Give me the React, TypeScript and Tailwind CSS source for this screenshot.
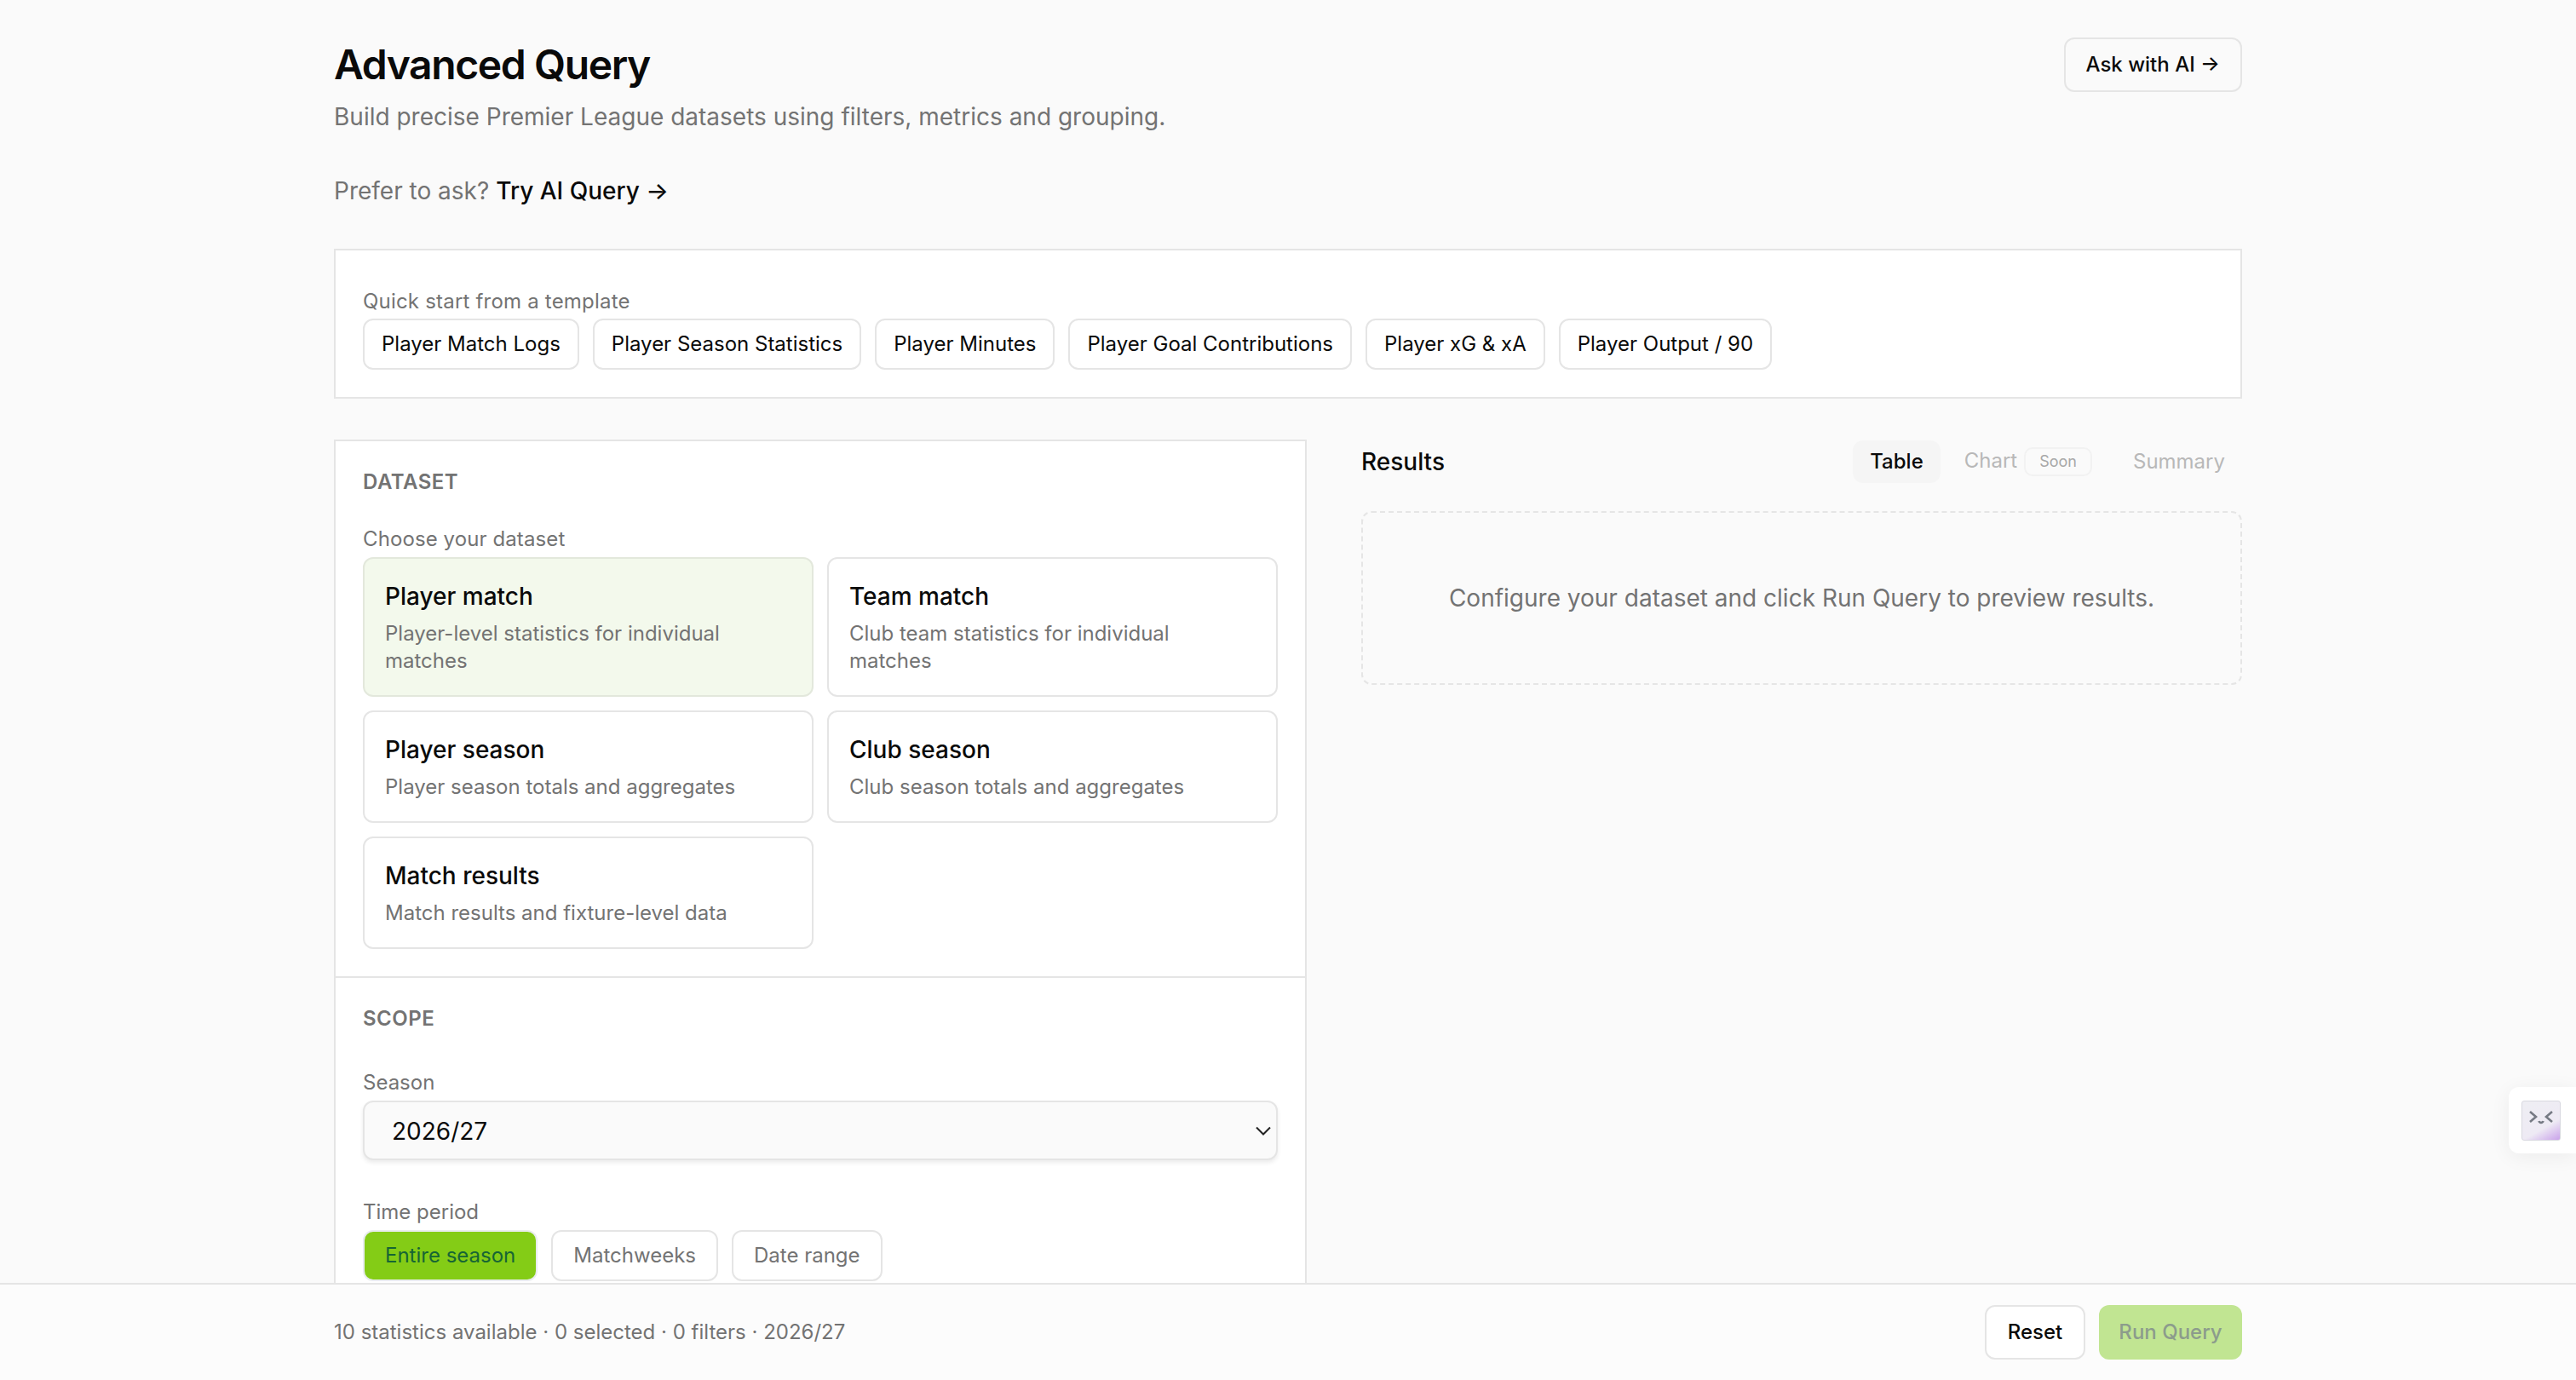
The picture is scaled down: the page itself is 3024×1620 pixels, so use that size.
const templates = [
  "Player Match Logs",
  "Player Season Statistics",
  "Player Minutes",
  "Player Goal Contributions",
  "Player xG & xA",
  "Player Output / 90",
];

const datasets = [
  { title: "Player match", desc: "Player-level statistics for individual matches", active: true },
  { title: "Team match", desc: "Club team statistics for individual matches" },
  { title: "Player season", desc: "Player season totals and aggregates" },
  { title: "Club season", desc: "Club season totals and aggregates" },
  { title: "Match results", desc: "Match results and fixture-level data" },
];

function DatasetCard({ title, desc, active }: { title: string; desc: string; active?: boolean }) {
  return (
    <button
      type="button"
      className={
        active
          ? "rounded-[12px] border-2 border-[#e3e8dc] bg-[#f3f9ec] p-[24px] text-left"
          : "rounded-[12px] border-2 border-[#e5e5e5] bg-white p-[24px] text-left"
      }
    >
      <div className="text-[28px] leading-[40px] font-medium text-[#0a0a0a]">{title}</div>
      <div className="mt-[8px] text-[24px] leading-[32px] text-[#737373]">{desc}</div>
    </button>
  );
}

function TimeButton({ label, active }: { label: string; active?: boolean }) {
  return (
    <button
      type="button"
      className={
        active
          ? "h-[60px] rounded-[12px] border-2 border-[#e9ecef] bg-[#84cc16] px-[24px] text-[24px] text-[#166534]"
          : "h-[60px] rounded-[12px] border-2 border-[#e5e5e5] bg-white px-[24px] text-[24px] text-[#737373]"
      }
    >
      {label}
    </button>
  );
}

export default function App() {
  return (
    <div className="relative flex h-screen flex-col overflow-hidden bg-[#fafafa] font-['Inter',sans-serif] text-[#0a0a0a]">
      <main className="min-h-0 flex-1 overflow-hidden">
        <div className="mx-auto w-[2240px] pt-[44px]">
          <header className="flex items-start justify-between">
            <div>
              <h1 className="text-[48px] leading-[64px] font-semibold tracking-[-1.4px]">Advanced Query</h1>
              <p className="mt-[9px] text-[28px] leading-[40px] text-[#737373]">
                Build precise Premier League datasets using filters, metrics and grouping.
              </p>
            </div>
            <button
              type="button"
              className="h-[64px] rounded-[12px] border-2 border-[#e5e5e5] bg-[#fafafa] px-[24px] text-[24px] font-medium"
            >
              Ask with AI →
            </button>
          </header>

          <p className="mt-[47px] text-[28px] leading-[40px] text-[#737373]">
            Prefer to ask? <span className="font-medium text-[#0a0a0a]">Try AI Query →</span>
          </p>

          <section className="mt-[48px] border-2 border-[#e5e5e5] bg-white px-[32px] pt-[40px] pb-[32px]">
            <div className="text-[24px] leading-[40px] tracking-[0.2px] text-[#737373]">Quick start from a template</div>
            <div className="flex gap-[16px]">
              {templates.map((t) => (
                <button
                  key={t}
                  type="button"
                  className="h-[60px] rounded-[12px] border-2 border-[#e5e5e5] bg-white px-[20px] text-[24px]"
                >
                  {t}
                </button>
              ))}
            </div>
          </section>

          <div className="mt-[48px] grid grid-cols-[1142px_1034px] gap-[64px]">
            {/* Left panel, cut off by the footer */}
            <div className="border-2 border-[#e5e5e5] bg-white">
              <section className="border-b-2 border-[#e5e5e5] p-[32px]">
                <h2 className="text-[24px] leading-[32px] font-semibold tracking-[0.5px] text-[#737373]">DATASET</h2>
                <div className="mt-[31px] mb-[1px] text-[24px] leading-[40px] tracking-[0.1px] text-[#737373]">
                  Choose your dataset
                </div>
                <div className="grid grid-cols-2 gap-[16px]">
                  {datasets.map((d) => (
                    <DatasetCard key={d.title} {...d} />
                  ))}
                </div>
              </section>
              <section className="p-[32px]">
                <h2 className="text-[24px] leading-[32px] font-semibold tracking-[0.5px] text-[#737373]">SCOPE</h2>
                <div className="mt-[39px] mb-[1px] text-[24px] leading-[40px] text-[#737373]">Season</div>
                <div className="flex h-[70px] items-center justify-between rounded-[12px] border-2 border-[#e5e5e5] bg-[#fafafa] pr-[6px] pl-[32px] text-[28px] shadow-[0_3px_5px_rgba(0,0,0,0.08)]">
                  <span className="pt-[1px]">2026/27</span>
                  <svg width="18" height="11" viewBox="0 0 18 11" fill="none" stroke="#222222" strokeWidth="2">
                    <path d="M1 1.5l8 8 8-8" />
                  </svg>
                </div>
                <div className="mt-[41px] mb-[1px] text-[24px] leading-[40px] text-[#737373]">Time period</div>
                <div className="flex gap-[16px]">
                  <TimeButton label="Entire season" active />
                  <TimeButton label="Matchweeks" />
                  <TimeButton label="Date range" />
                </div>
              </section>
            </div>

            <div>
              <div className="mt-[1px] flex h-[50px] items-center justify-between">
                <h2 className="text-[28px] font-medium">Results</h2>
                <div className="flex gap-[8px] text-[24px]">
                  <button type="button" className="h-[50px] rounded-[12px] bg-[#f5f5f5] px-[20px] font-medium">
                    Table
                  </button>
                  <button type="button" className="flex h-[50px] items-center gap-[8px] px-[20px] text-[#b8b8b8]">
                    <span className="-mt-[3px]">Chart</span>
                    <span className="rounded-[10px] border-2 border-[#f2f2f2] px-[16px] text-[18px] leading-[30px] text-[#a8a8a8]">
                      Soon
                    </span>
                  </button>
                  <button type="button" className="h-[50px] px-[20px] text-[#b8b8b8]">
                    Summary
                  </button>
                </div>
              </div>
              <div className="mt-[33px] flex h-[204px] items-center justify-center rounded-[12px] border-2 border-dashed border-[#e5e5e5] text-[28px] text-[#737373]">
                Configure your dataset and click Run Query to preview results.
              </div>
            </div>
          </div>
        </div>
      </main>

      <footer className="h-[114px] shrink-0 border-t-2 border-[#e5e5e5] bg-[#fcfcfc]">
        <div className="mx-auto flex h-full w-[2240px] items-center justify-between">
          <span className="text-[24px] text-[#737373]">10 statistics available · 0 selected · 0 filters · 2026/27</span>
          <div className="flex gap-[16px]">
            <button
              type="button"
              className="h-[64px] w-[118px] rounded-[12px] border-2 border-[#e5e5e5] bg-white text-[24px] font-medium"
            >
              Reset
            </button>
            <button
              type="button"
              className="h-[64px] w-[168px] rounded-[12px] bg-[#c1e592] text-[24px] font-medium text-[#8c9c8c]"
            >
              Run Query
            </button>
          </div>
        </div>
      </footer>

      {/* Floating helper tab on the right edge */}
      <div className="absolute top-[1276px] right-0 flex h-[78px] w-[79px] items-center rounded-l-[12px] bg-white pl-[15px] shadow-[0_4px_24px_rgba(0,0,0,0.06)]">
        <div className="flex h-[47px] w-[46px] items-center justify-center rounded-[3px] border border-[#d8d8e0] bg-[linear-gradient(150deg,#eeeef3_0%,#eeeaf4_65%,#c9a2ea_100%)]">
          <svg width="30" height="20" viewBox="0 0 30 20" fill="none" stroke="#767a84" strokeWidth="2.6" className="-mt-[7px]">
            <path d="M2 3l7 6-7 6" />
            <path d="M28 3l-7 6 7 6" />
            <path d="M12.5 14a2.6 2.6 0 0 0 5 0" />
          </svg>
        </div>
      </div>
    </div>
  );
}
